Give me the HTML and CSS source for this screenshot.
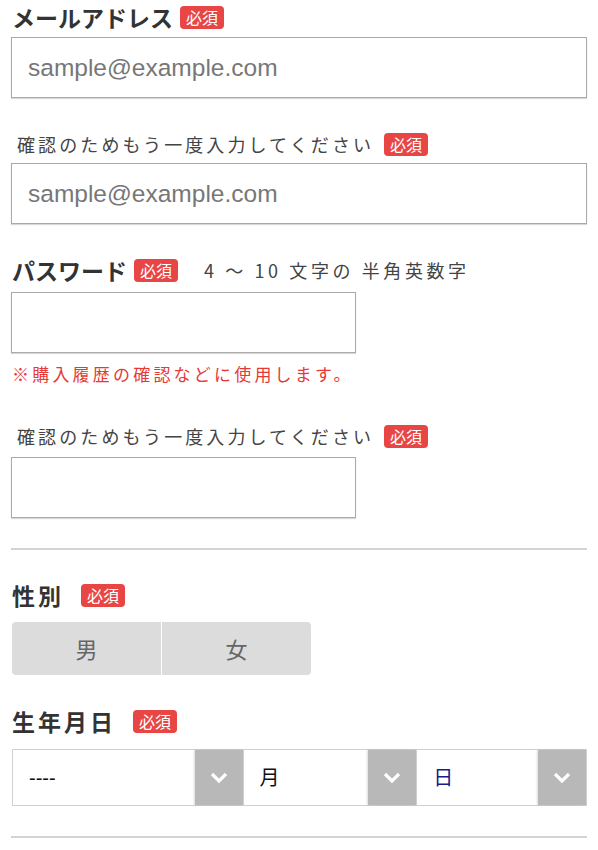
FILE: index.html
```
<!doctype html>
<html>

<head>
    <meta charset="utf-8">
    <link rel="stylesheet" href="styles.css">
</head>

<body>

    <div class="form">

        <div class="row rowFirst">
            <span class="title">メールアドレス</span>
            <span class="badge">必須</span>
        </div>
        <input type="text" class="textBox" placeholder="sample@example.com">

        <div class="row rowConfirm">
            <span class="subTitle">確認のためもう一度入力してください</span>
            <span class="badge">必須</span>
        </div>
        <input type="text" class="textBox" placeholder="sample@example.com">

        <div class="row rowPassword">
            <span class="title">パスワード</span>
            <span class="badge">必須</span>
            <span class="hint">4 〜 10 文字の 半角英数字</span>
        </div>
        <input type="password" class="textBox shortBox">
        <div class="note">※購入履歴の確認などに使用します。</div>

        <div class="row rowConfirm2">
            <span class="subTitle">確認のためもう一度入力してください</span>
            <span class="badge">必須</span>
        </div>
        <input type="password" class="textBox shortBox">

        <div class="line lineFirst"></div>

        <div class="row rowGender">
            <span class="title spaced">性別</span>
            <span class="badge">必須</span>
        </div>
        <div class="genderBox">
            <div class="genderButton">男</div>
            <div class="genderButton">女</div>
        </div>

        <div class="row rowBirth">
            <span class="title spaced">生年月日</span>
            <span class="badge">必須</span>
        </div>
        <div class="birthBox">
            <div class="selectWrap yearSelect">
                <select class="selectBox"><option>----</option></select>
                <span class="arrow"><svg width="18" height="12" viewBox="0 0 18 12"><path d="M2 2 L9 9 L16 2" fill="none" stroke="#fff" stroke-width="3.2"/></svg></span>
            </div>
            <div class="selectWrap monthSelect">
                <select class="selectBox"><option>月</option></select>
                <span class="arrow"><svg width="18" height="12" viewBox="0 0 18 12"><path d="M2 2 L9 9 L16 2" fill="none" stroke="#fff" stroke-width="3.2"/></svg></span>
            </div>
            <div class="selectWrap daySelect">
                <select class="selectBox dayText"><option>日</option></select>
                <span class="arrow"><svg width="18" height="12" viewBox="0 0 18 12"><path d="M2 2 L9 9 L16 2" fill="none" stroke="#fff" stroke-width="3.2"/></svg></span>
            </div>
        </div>

        <div class="line lineLast"></div>

    </div>

</body>

</html>
```

FILE: styles.css
```
body {
    margin: 0;
    background: #fff;
    font-family: "Noto Sans CJK JP", "Liberation Sans", sans-serif;
    color: #333;
}

.form {
    width: 576px;
    margin-left: 11px;
}

.row {
    display: flex;
    align-items: center;
    height: 30px;
}

.rowFirst {
    margin-top: 2px;
    margin-bottom: 5px;
}

.rowConfirm {
    margin-top: 31px;
    margin-bottom: 4px;
}

.rowPassword {
    margin-top: 31px;
    margin-bottom: 7px;
}

.rowConfirm2 {
    margin-top: 35px;
    margin-bottom: 6px;
}

.rowGender {
    margin-top: 30px;
}

.rowBirth {
    margin-top: 31px;
}

.title {
    font-size: 23px;
    font-weight: bold;
    color: #333;
    margin-left: 1px;
    margin-right: 7px;
}

.title.spaced {
    letter-spacing: 3px;
    margin-right: 17px;
}

.subTitle {
    font-size: 18px;
    color: #444;
    letter-spacing: 3.1px;
    margin-left: 6px;
    margin-right: 10px;
}

.badge {
    display: inline-block;
    height: 23px;
    line-height: 23px;
    padding: 0 6px;
    font-size: 16px;
    color: #fff;
    background: #e84545;
    border-radius: 4px;
}

.hint {
    font-size: 18px;
    color: #444;
    letter-spacing: 3.6px;
    margin-left: 26px;
}

.textBox {
    display: block;
    box-sizing: border-box;
    width: 576px;
    height: 61px;
    margin: 0;
    padding: 0 16px;
    border: 1px solid #aaa;
    box-shadow: 0 1px 1px rgba(0, 0, 0, 0.15);
    font-family: "Liberation Sans", sans-serif;
    font-size: 24.5px;
    color: #333;
    outline: none;
}

.textBox::placeholder {
    color: #777;
}

.shortBox {
    width: 345px;
}

.note {
    margin-top: 9px;
    font-size: 17px;
    line-height: 24px;
    letter-spacing: 3.2px;
    color: #e53935;
    margin-left: 1px;
}

.line {
    height: 2px;
    background: #d4d4d4;
}

.lineFirst {
    margin-top: 30px;
}

.lineLast {
    margin-top: 30px;
}

.genderBox {
    display: flex;
    gap: 1px;
    width: 299px;
    margin-top: 12px;
    margin-left: 1px;
}

.genderButton {
    flex: 1;
    height: 53px;
    line-height: 53px;
    text-align: center;
    background: #dcdcdc;
    color: #666;
    font-size: 22px;
}

.genderButton:first-child {
    border-radius: 4px 0 0 4px;
}

.genderButton:last-child {
    border-radius: 0 4px 4px 0;
}

.birthBox {
    display: flex;
    margin-top: 13px;
    margin-left: 1px;
}

.selectWrap {
    position: relative;
    box-sizing: border-box;
    height: 57px;
    border: 1px solid #d0d0d0;
}

.yearSelect {
    width: 232px;
}

.monthSelect {
    width: 174px;
    border-left: none;
}

.daySelect {
    width: 170px;
    border-left: none;
}

.selectBox {
    appearance: none;
    -webkit-appearance: none;
    width: 100%;
    height: 100%;
    border: none;
    background: #fff;
    padding: 0 0 0 16px;
    font-family: "Liberation Sans", "Noto Sans CJK JP", sans-serif;
    font-size: 20px;
    color: #111;
    outline: none;
}

.dayText {
    color: #1a1a8c;
}

.arrow {
    position: absolute;
    top: 0;
    right: 0;
    width: 48px;
    height: 100%;
    background: #b8b8b8;
    box-shadow: -1px 0 2px rgba(0, 0, 0, 0.15);
    display: flex;
    align-items: center;
    justify-content: center;
    pointer-events: none;
}
```
